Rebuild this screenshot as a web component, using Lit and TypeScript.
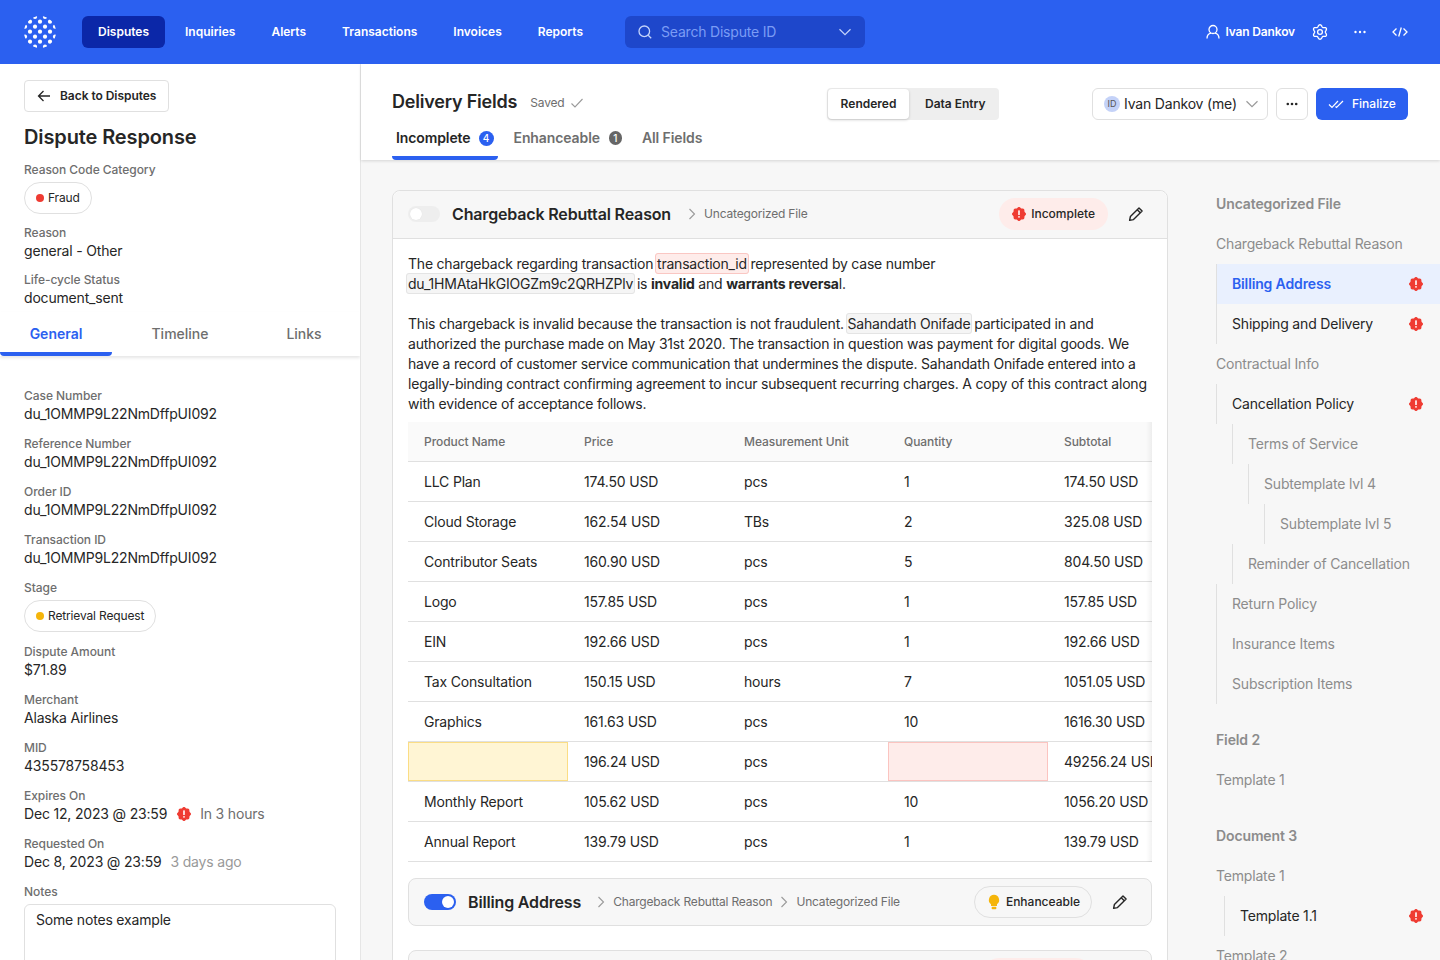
import { LitElement, html, svg, css } from "lit";
import { customElement } from "lit/decorators.js";

const polar = (base: number, amp: number, lobes: number, c: number) => {
  const pts: string[] = [];
  for (let i = 0; i < 96; i++) {
    const t = (i / 96) * Math.PI * 2;
    const r = base + amp * Math.cos(lobes * t);
    pts.push(`${(c + r * Math.sin(t)).toFixed(2)},${(c - r * Math.cos(t)).toFixed(2)}`);
  }
  return `M${pts.join("L")}Z`;
};

const alertIcon = () => html`<svg class="alert" width="14" height="14" viewBox="0 0 14 14">
  <path d=${polar(6.5, 0.5, 8, 7)} fill="#ef3b32"></path>
  <rect x="6.2" y="3.2" width="1.6" height="4.8" rx=".6" fill="#fff"></rect>
  <rect x="6.2" y="9" width="1.6" height="1.7" rx=".6" fill="#fff"></rect>
</svg>`;

const pencil = () => html`<svg width="16" height="16" viewBox="0 0 16 16" fill="none" stroke="#262626" stroke-width="1.4" stroke-linejoin="round">
  <path d="M11 1.9l3.1 3.1-8.6 8.6-3.9.8.8-3.9z"></path><path d="M9.2 3.7l3.1 3.1"></path>
</svg>`;

const crumb = () => html`<svg width="8" height="14" viewBox="0 0 8 14" fill="none" stroke="#9a9a9a" stroke-width="1.1"><path d="M1.5 2l5 5-5 5"></path></svg>`;

const chevron = (color: string) => html`<svg width="14" height="8" viewBox="0 0 14 8" fill="none" stroke=${color} stroke-width="1.2"><path d="M1.5 1.2L7 6.6l5.5-5.4"></path></svg>`;

const logo = () => {
  const dotRows: [number, number[]][] = [
    [17, [35, 45]],
    [21.7, [30, 40, 50]],
    [26.7, [25, 35, 45, 55]],
    [31.7, [30, 40, 50]],
    [36.7, [25, 35, 45, 55]],
    [41.7, [30, 40, 50]],
    [46.7, [35, 45]],
  ];
  return html`<svg class="logo" width="32" height="32" viewBox="24 16 32 32">
    <defs><clipPath id="lc"><circle cx="40" cy="32" r="16"></circle></clipPath></defs>
    <g clip-path="url(#lc)" fill="#fff">
      ${dotRows.flatMap(([y, xs]) => xs.map((x) => svg`<circle cx=${x} cy=${y} r="2.1"></circle>`))}
    </g>
  </svg>`;
};

const rows: [string, string, string, string, string][] = [
  ["LLC Plan", "174.50 USD", "pcs", "1", "174.50 USD"],
  ["Cloud Storage", "162.54 USD", "TBs", "2", "325.08 USD"],
  ["Contributor Seats", "160.90 USD", "pcs", "5", "804.50 USD"],
  ["Logo", "157.85 USD", "pcs", "1", "157.85 USD"],
  ["EIN", "192.66 USD", "pcs", "1", "192.66 USD"],
  ["Tax Consultation", "150.15 USD", "hours", "7", "1051.05 USD"],
  ["Graphics", "161.63 USD", "pcs", "10", "1616.30 USD"],
  ["", "196.24 USD", "pcs", "", "49256.24 USD"],
  ["Monthly Report", "105.62 USD", "pcs", "10", "1056.20 USD"],
  ["Annual Report", "139.79 USD", "pcs", "1", "139.79 USD"],
];

type NavItem = { t: string; kind?: "head" | "plain" | "dark" | "active"; x?: number; alert?: boolean; gap?: boolean; bare?: boolean };
const nav: NavItem[] = [
  { t: "Uncategorized File", kind: "head", bare: true },
  { t: "Chargeback Rebuttal Reason", bare: true },
  { t: "Billing Address", kind: "active", x: 0, alert: true },
  { t: "Shipping and Delivery", kind: "dark", x: 0, alert: true },
  { t: "Contractual Info", bare: true },
  { t: "Cancellation Policy", kind: "dark", x: 0, alert: true },
  { t: "Terms of Service", x: 16 },
  { t: "Subtemplate lvl 4", x: 32 },
  { t: "Subtemplate lvl 5", x: 48 },
  { t: "Reminder of Cancellation", x: 16 },
  { t: "Return Policy", x: 0 },
  { t: "Insurance Items", x: 0 },
  { t: "Subscription Items", x: 0 },
  { t: "Field 2", kind: "head", bare: true, gap: true },
  { t: "Template 1", bare: true },
  { t: "Document 3", kind: "head", bare: true, gap: true },
  { t: "Template 1", bare: true },
  { t: "Template 1.1", kind: "dark", x: 8, alert: true },
  { t: "Template 2", bare: true },
];

const fields1: [string, string][] = [
  ["Case Number", "du_1OMMP9L22NmDffpUI092"],
  ["Reference Number", "du_1OMMP9L22NmDffpUI092"],
  ["Order ID", "du_1OMMP9L22NmDffpUI092"],
  ["Transaction ID", "du_1OMMP9L22NmDffpUI092"],
];
const fields2: [string, string][] = [
  ["Dispute Amount", "$71.89"],
  ["Merchant", "Alaska Airlines"],
  ["MID", "435578758453"],
];

@customElement("app-root")
export class AppRoot extends LitElement {
  static styles = css`
    :host { display: block; height: 960px; overflow: hidden; font-family: Inter, "Liberation Sans", sans-serif; color: #262626; font-size: 14px; line-height: 20px; letter-spacing: -0.18px; background: #f7f7f7; }
    * { box-sizing: border-box; }
    svg { flex: none; display: block; }
    .top { height: 64px; background: #2b60f0; display: flex; align-items: center; padding: 0 32px 0 24px; color: #fff; }
    .logo { margin-right: 26px; }
    .menu { display: flex; gap: 4px; width: 543px; flex: none; letter-spacing: 0; }
    .menu a { height: 32px; display: flex; align-items: center; padding: 0 16px; font-size: 12px; font-weight: 600; border-radius: 6px; color: #fff; }
    .menu a.on { background: #0b27a8; }
    .search { width: 240px; height: 32px; border-radius: 6px; background: #1e47cb; display: flex; align-items: center; padding: 0 13px; gap: 9px; color: #7b9cf5; letter-spacing: -0.2px; }
    .search span { flex: 1; }
    .top-right { margin-left: auto; display: flex; align-items: center; font-size: 12px; font-weight: 600; letter-spacing: -0.15px; }
    .top-right .name { margin-left: 5px; margin-right: 17px; }
    .top-right .dots { margin: 0 24px 0 24px; }
    .page { display: flex; height: 896px; overflow: hidden; }
    .side { width: 361px; flex: none; background: #fff; border-right: 1px solid #e6e6e6; overflow: hidden; }
    .side-top { padding: 16px 24px 0; }
    .back { display: inline-flex; align-items: center; gap: 8px; height: 32px; padding: 0 0 0 11px; width: 145px; border: 1px solid #e0e0e0; border-radius: 4px; font-size: 12px; font-weight: 600; letter-spacing: -0.05px; white-space: nowrap; }
    h1 { margin: 12px 0 12px; font-size: 20px; line-height: 26px; font-weight: 600; letter-spacing: -0.12px; }
    .lab { font-size: 12px; line-height: 16px; font-weight: 500; color: #6e6e6e; letter-spacing: -0.05px; }
    .val { line-height: 20px; display: flex; align-items: center; }
    .chip { display: inline-flex; align-items: center; gap: 4px; height: 32px; padding: 0 11px; border: 1px solid #e0e0e0; border-radius: 16px; font-size: 12px; margin-top: 4px; letter-spacing: -0.15px; }
    .dot { width: 8px; height: 8px; border-radius: 50%; }
    .g { margin-bottom: 11px; }
    .g.last { margin-bottom: 0; }
    .stabs { display: grid; grid-template-columns: 112px 112px 112px; gap: 12px; height: 44px; box-shadow: 0 2px 3px rgba(0,0,0,.1); margin-top: 4px; letter-spacing: 0; }
    .stabs div { display: flex; align-items: center; justify-content: center; font-weight: 500; color: #6e6e6e; border-bottom: 4px solid transparent; padding-top: 4px; }
    .stabs .on { color: #2b60f0; font-weight: 600; border-bottom-color: #2b60f0; border-radius: 4px; }
    .fields { padding: 32px 24px 0; }
    .fields .g { margin-bottom: 12px; }
    .alert { margin: 0 9px 0 10px; }
    .muted { color: #6e6e6e; }
    .faint { color: #999; margin-left: 9px; }
    .notes { height: 120px; margin-top: 4px; border: 1px solid #e0e0e0; border-radius: 6px; padding: 5px 11px; }
    .main { flex: 1; min-width: 0; display: flex; flex-direction: column; }
    .bar { height: 96px; flex: none; background: #fff; box-shadow: 0 1px 3px rgba(0,0,0,.14); padding: 24px 32px 0 31px; position: relative; }
    .bar-row { display: flex; align-items: center; height: 32px; }
    .bar-left { width: 435px; flex: none; display: flex; align-items: center; }
    .bar-row h2 { margin: 0; font-size: 18px; line-height: 26px; font-weight: 600; letter-spacing: -0.2px; position: relative; top: -2px; }
    .saved { display: flex; align-items: center; gap: 6px; margin-left: 13px; font-size: 12px; color: #6e6e6e; letter-spacing: -0.2px; position: relative; top: -1px; }
    .seg { width: 172px; height: 32px; background: #eee; border-radius: 4px; display: flex; padding: 1px; font-size: 12px; font-weight: 600; letter-spacing: 0; }
    .seg div { display: flex; align-items: center; }
    .seg .on { width: 81px; justify-content: center; background: #fff; border-radius: 4px; box-shadow: 0 1px 3px rgba(0,0,0,.18); }
    .seg .off { padding-left: 16px; }
    .sel { margin-left: auto; width: 176px; height: 32px; border: 1px solid #e0e0e0; border-radius: 6px; display: flex; align-items: center; padding: 0 8px 0 11px; gap: 4px; white-space: nowrap; }
    .av { width: 16px; height: 16px; border-radius: 50%; background: #c4d2f8; color: #555; font-size: 9px; line-height: 16px; text-align: center; flex: none; letter-spacing: 0; }
    .sel svg { margin-left: auto; }
    .more { margin-left: 8px; width: 32px; height: 32px; border: 1px solid #e0e0e0; border-radius: 6px; display: flex; align-items: center; justify-content: center; }
    .fin { margin-left: 8px; width: 92px; height: 32px; background: #2b60f0; color: #fff; border-radius: 6px; font-size: 12px; font-weight: 500; letter-spacing: 0; display: flex; align-items: center; padding-left: 12px; gap: 8px; }
    .tabs { display: flex; gap: 12px; height: 40px; letter-spacing: -0.1px; }
    .tabs div { display: flex; align-items: center; padding: 0 4px; gap: 8px; font-weight: 600; color: #6e6e6e; height: 40px; border-bottom: 4px solid transparent; }
    .tabs .on { color: #262626; border-bottom-color: #2b60f0; border-radius: 4px; }
    .bdg { width: 15px; height: 15px; border-radius: 50%; background: #2b60f0; color: #fff; font-size: 10px; line-height: 15px; text-align: center; font-weight: 500; letter-spacing: 0; }
    .bdg.gray { width: 13px; height: 14px; background: #666; border-radius: 7px; line-height: 14px; margin-left: 1px; }
    .content { flex: 1; min-height: 0; display: flex; overflow: hidden; padding: 0 0 0 31px; gap: 48px; }
    .cardcol { width: 776px; flex: none; padding-top: 30px; }
    .card { background: #fff; border: 1px solid #e0e0e0; border-radius: 8px 8px 0 0; padding-bottom: 24px; }
    .chead { height: 48px; background: #f7f7f7; border-bottom: 1px solid #e0e0e0; border-radius: 8px 8px 0 0; display: flex; align-items: center; padding: 0 15px 1px; }
    .tog { width: 32px; height: 16px; border-radius: 8px; background: #eee; padding: 2px; display: flex; flex: none; }
    .tog i { width: 12px; height: 12px; border-radius: 50%; background: #fff; display: block; box-shadow: 0 0 1px rgba(0,0,0,.1); }
    .tog.on { background: #2b60f0; justify-content: flex-end; }
    .ctitle { font-size: 16px; font-weight: 600; margin: 0 16px 0 12px; white-space: nowrap; letter-spacing: -0.16px; }
    .chead .first { margin-left: 12px; margin-right: 17px; }
    .path { font-size: 12px; color: #6e6e6e; margin-left: 8px; margin-right: 8px; white-space: nowrap; letter-spacing: -0.18px; }
    .pill { margin-left: auto; height: 32px; border-radius: 16px; display: flex; align-items: center; padding: 0 11px 0 12px; font-size: 12px; font-weight: 500; white-space: nowrap; letter-spacing: 0; }
    .pill.red { background: #feecea; padding-right: 13px; }
    .pill.red .alert { margin: 0 5px 0 1px; }
    .pill.out { border: 1px solid #e0e0e0; gap: 5px; }
    .pen { margin-left: 20px; margin-right: 8px; }
    .cbody { padding: 15px 15px 0; }
    p { margin: 0; letter-spacing: -0.21px; }
    p + p { margin-top: 20px; }
    .tok { padding: 1px 1px; margin: 0 -2px; border: 1px solid #e4e4e4; background: #f5f5f5; border-radius: 3px; }
    .tok.r { background: #feecea; border-color: #fac7c3; }
    .twrap { margin-top: 8px; position: relative; overflow: hidden; width: 744px; }
    .twrap::after { content: ""; position: absolute; top: 0; bottom: 0; right: 0; width: 6px; background: linear-gradient(90deg, rgba(0,0,0,0), rgba(0,0,0,.05)); }
    table { border-collapse: separate; border-spacing: 0; table-layout: fixed; width: 800px; }
    th, td { width: 160px; height: 40px; padding: 0 16px; text-align: left; border-bottom: 1px solid #e0e0e0; white-space: nowrap; font-weight: 400; overflow: visible; }
    th { font-size: 12px; font-weight: 500; color: #6e6e6e; background: #fafafa; letter-spacing: -0.05px; }
    td.y { background: #fff5d4; box-shadow: inset 0 0 0 1px #fbdd85; }
    td.e { background: #feecea; box-shadow: inset 0 0 0 1px #fbc4c0; }
    .sub { margin: 16px 0 0; border: 1px solid #e0e0e0; border-radius: 8px; height: 48px; background: #f7f7f7; display: flex; align-items: center; padding: 0 15px; }
    .sub + .sub { margin-top: 24px; }
    .nav { flex: 1; padding-top: 24px; min-width: 0; }
    .nitem { height: 40px; display: flex; align-items: center; color: #8c8c8c; white-space: nowrap; }
    .nitem.head { font-weight: 600; letter-spacing: -0.12px; }
    .nitem.dark { color: #262626; }
    .nitem.active { color: #2b60f0; font-weight: 600; letter-spacing: -0.14px; background: #e9f0fe; }
    .nitem.bordered { border-left: 1px solid #e0e0e0; padding-left: 15px; }
    .nitem.gap { margin-top: 16px; }
    .nitem .alert { margin: 0 17px 0 auto; }
  `;

  render() {
    return html`
      <div class="top">
        ${logo()}
        <div class="menu">
          <a class="on">Disputes</a><a>Inquiries</a><a>Alerts</a><a>Transactions</a><a>Invoices</a><a>Reports</a>
        </div>
        <div class="search">
          <svg width="14" height="14" viewBox="0 0 14 14" fill="none" stroke="#c5d4fb" stroke-width="1.3"><circle cx="6.3" cy="6.3" r="5.3"></circle><path d="M10.2 10.2l3 3"></path></svg>
          <span>Search Dispute ID</span>
          ${chevron("#c5d4fb")}
        </div>
        <div class="top-right">
          <svg width="14" height="16" viewBox="0 0 14 16" fill="none" stroke="#fff" stroke-width="1.3"><circle cx="7" cy="5.5" r="4"></circle><path d="M1 14.5c0-3 2-5 4-5.4M13 14.5c0-3-2-5-4-5.4"></path></svg>
          <span class="name">Ivan Dankov</span>
          <svg width="16" height="16" viewBox="0 0 16 16" fill="none" stroke="#fff" stroke-width="1.3"><path d=${polar(6.3, 1, 6, 8)}></path><circle cx="8" cy="8" r="2.4"></circle></svg>
          <svg class="dots" width="16" height="16" viewBox="0 0 16 16" fill="#fff"><circle cx="3.5" cy="8" r="1.2"></circle><circle cx="8" cy="8" r="1.2"></circle><circle cx="12.5" cy="8" r="1.2"></circle></svg>
          <svg width="16" height="16" viewBox="0 0 16 16" fill="none" stroke="#fff" stroke-width="1.3"><path d="M4.5 4.5L1 8l3.5 3.5M11.5 4.5L15 8l-3.5 3.5M9.3 3.5L6.7 12.5"></path></svg>
        </div>
      </div>
      <div class="page">
        <aside class="side">
          <div class="side-top">
            <div class="back">
              <svg width="16" height="16" viewBox="0 0 16 16" fill="none" stroke="#262626" stroke-width="1.3"><path d="M14 8H2.5M7.5 3L2.5 8l5 5"></path></svg>
              Back to Disputes
            </div>
            <h1>Dispute Response</h1>
            <div class="g"><div class="lab">Reason Code Category</div><div class="chip"><span class="dot" style="background:#ef3b32"></span>Fraud</div></div>
            <div class="g"><div class="lab">Reason</div><div class="val">general - Other</div></div>
            <div class="g last"><div class="lab">Life-cycle Status</div><div class="val">document_sent</div></div>
          </div>
          <div class="stabs"><div class="on">General</div><div>Timeline</div><div>Links</div></div>
          <div class="fields">
            ${fields1.map(([l, v]) => html`<div class="g"><div class="lab">${l}</div><div class="val">${v}</div></div>`)}
            <div class="g"><div class="lab">Stage</div><div class="chip"><span class="dot" style="background:#f5b50a"></span>Retrieval Request</div></div>
            ${fields2.map(([l, v]) => html`<div class="g"><div class="lab">${l}</div><div class="val">${v}</div></div>`)}
            <div class="g"><div class="lab">Expires On</div><div class="val">Dec 12, 2023 @ 23:59${alertIcon()}<span class="muted">In 3 hours</span></div></div>
            <div class="g"><div class="lab">Requested On</div><div class="val">Dec 8, 2023 @ 23:59<span class="faint">3 days ago</span></div></div>
            <div class="g"><div class="lab">Notes</div><div class="notes">Some notes example</div></div>
          </div>
        </aside>
        <main class="main">
          <div class="bar">
            <div class="bar-row">
              <div class="bar-left">
                <h2>Delivery Fields</h2>
                <div class="saved">Saved
                  <svg width="14" height="12" viewBox="0 0 14 12" fill="none" stroke="#9a9a9a" stroke-width="1.1"><path d="M1.5 6.5l3.5 3.5 7.5-8"></path></svg>
                </div>
              </div>
              <div class="seg"><div class="on">Rendered</div><div class="off">Data Entry</div></div>
              <div class="sel"><span class="av">ID</span>Ivan Dankov (me)${chevron("#9a9a9a")}</div>
              <div class="more"><svg width="14" height="14" viewBox="0 0 14 14" fill="#262626"><circle cx="2.8" cy="7" r="1.3"></circle><circle cx="7" cy="7" r="1.3"></circle><circle cx="11.2" cy="7" r="1.3"></circle></svg></div>
              <div class="fin">
                <svg width="16" height="12" viewBox="0 0 16 12" fill="none" stroke="#fff" stroke-width="1.2"><path d="M1 6.5l3 3 6-6.5M7.5 8.5l1 1 6.5-6.5"></path></svg>
                Finalize
              </div>
            </div>
            <div class="tabs">
              <div class="on">Incomplete<span class="bdg">4</span></div>
              <div>Enhanceable<span class="bdg gray">1</span></div>
              <div>All Fields</div>
            </div>
          </div>
          <div class="content">
            <div class="cardcol">
              <div class="card">
                <div class="chead">
                  <span class="tog"><i></i></span>
                  <span class="ctitle first">Chargeback Rebuttal Reason</span>
                  ${crumb()}<span class="path">Uncategorized File</span>
                  <div class="pill red">${alertIcon()}Incomplete</div>
                  <div class="pen">${pencil()}</div>
                </div>
                <div class="cbody">
                  <p>The chargeback regarding transaction <span class="tok r">transaction_id</span> represented by case number <span class="tok">du_1HMAtaHkGIOGZm9c2QRHZPlv</span> is <b>invalid</b> and <b>warrants reversa</b>l.</p>
                  <p>This chargeback is invalid because the transaction is not fraudulent. <span class="tok">Sahandath Onifade</span> participated in and authorized the purchase made on May 31st 2020. The transaction in question was payment for digital goods. We have a record of customer service communication that undermines the dispute. Sahandath Onifade entered into a legally-binding contract confirming agreement to incur subsequent recurring charges. A copy of this contract along with evidence of acceptance follows.</p>
                  <div class="twrap">
                    <table>
                      <thead><tr><th>Product Name</th><th>Price</th><th>Measurement Unit</th><th>Quantity</th><th>Subtotal</th></tr></thead>
                      <tbody>
                        ${rows.map((r) => html`<tr>
                          <td class=${r[0] ? "" : "y"}>${r[0]}</td><td>${r[1]}</td><td>${r[2]}</td>
                          <td class=${r[3] ? "" : "e"}>${r[3]}</td><td>${r[4]}</td>
                        </tr>`)}
                      </tbody>
                    </table>
                  </div>
                  <div class="sub">
                    <span class="tog on"><i></i></span>
                    <span class="ctitle">Billing Address</span>
                    ${crumb()}<span class="path">Chargeback Rebuttal Reason</span>
                    ${crumb()}<span class="path">Uncategorized File</span>
                    <div class="pill out">
                      <svg width="14" height="16" viewBox="0 0 14 16" fill="#f5b50a"><path d="M7 .8a5.2 5.2 0 0 1 3 9.4V12H4v-1.8A5.2 5.2 0 0 1 7 .8z"></path><rect x="4.6" y="12.8" width="4.8" height="2.4" rx="1"></rect></svg>
                      Enhanceable
                    </div>
                    <div class="pen">${pencil()}</div>
                  </div>
                  <div class="sub">
                    <span class="tog on"><i></i></span>
                    <span class="ctitle">Shipping and Delivery</span>
                    ${crumb()}<span class="path">Chargeback Rebuttal Reason</span>
                    <div class="pill red">${alertIcon()}Incomplete</div>
                    <div class="pen">${pencil()}</div>
                  </div>
                </div>
              </div>
            </div>
            <nav class="nav">
              ${nav.map((n) => html`<div
                class="nitem ${n.kind ?? ""} ${n.bare ? "" : "bordered"} ${n.gap ? "gap" : ""}"
                style=${n.x ? `margin-left:${n.x}px` : ""}
              >${n.t}${n.alert ? alertIcon() : ""}</div>`)}
            </nav>
          </div>
        </main>
      </div>
    `;
  }
}
